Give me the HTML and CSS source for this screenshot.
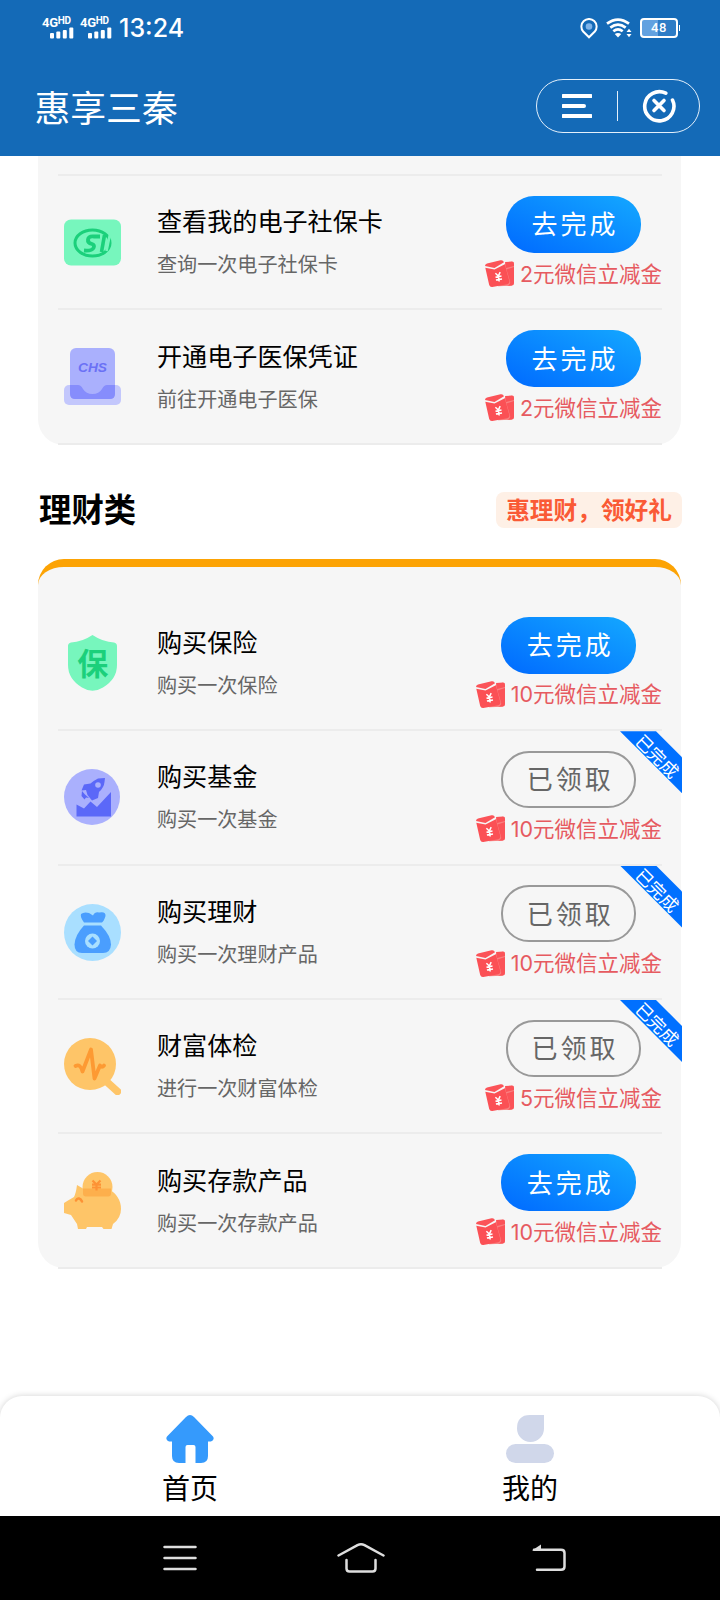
FILE: index.html
```html
<!DOCTYPE html>
<html lang="zh-CN">
<head>
<meta charset="utf-8">
<title>惠享三秦</title>
<link rel="stylesheet" href="styles.css">
</head>
<body>
<svg class="defs" aria-hidden="true">
  <symbol id="packet" viewBox="0 0 29 27">
    <path d="M20 3.5 26.5 1.8Q29 1.5 29 4V23Q29 25.6 26.5 25.8L13 26.3Z" fill="#f98080"/>
    <path d="M20 2 27 1.6Q29 1.6 29 4V6L21 8Z" fill="#fb5358"/>
    <path d="M0 6Q0 4.200 2 3.600L15.500.3Q18-.3 19 2.200L9.500 8Z" fill="#fb5358"/>
    <path d="M.3 7.800 9.500 9.500 19.800 4.200 24.300 21Q24.800 23.500 22.400 24.200L7.300 26.900Q5 27.200 4.200 25Z" fill="#fb5055"/>
    <path d="M21.500 9.500 29 7V23Q29 25.400 26.500 25.600L22 25.800Q26 24.600 25 21.500Z" fill="#fb5358"/>
    <path d="M10.400 13.200 13.300 16 15.200 12.200M13.300 16 14.200 21.500M10.500 17.200 16.500 16M10.900 20 17 18.900" fill="none" stroke="#fff" stroke-width="1.500"/>
  </symbol>
</svg>
<div class="phone">
  <header class="top">
    <div class="status">
      <div class="status-left">
        <div class="sim"><span class="net">4G<sup>HD</sup></span><svg width="24" height="12" viewBox="0 0 24 12"><g fill="#fff"><rect y="6" width="4" height="5.500" rx="1"/><rect x="6.300" y="4.500" width="4" height="7" rx="1"/><rect x="12.800" y="3" width="4" height="8.500" rx="1"/><rect x="19.300" y=".5" width="4" height="11" rx="1"/></g></svg></div>
        <div class="sim"><span class="net">4G<sup>HD</sup></span><svg width="24" height="12" viewBox="0 0 24 12"><g fill="#fff"><rect y="6" width="4" height="5.500" rx="1"/><rect x="6.300" y="4.500" width="4" height="7" rx="1"/><rect x="12.800" y="3" width="4" height="8.500" rx="1"/><rect x="19.300" y=".5" width="4" height="11" rx="1"/></g></svg></div>
        <span class="time">13:24</span>
      </div>
      <div class="status-right">
        <svg width="18" height="21" viewBox="0 0 18 21"><path d="M9 19.300 3.200 13.500A7.600 7.600 0 1 1 14.800 13.500Z" fill="none" stroke="#fff" stroke-width="2"/><circle cx="9" cy="8.500" r="3.300" fill="#7fb4ea"/></svg>
        <svg width="26" height="20" viewBox="0 0 26 20"><g fill="none" stroke="#fff" stroke-width="2.700"><path d="M1 5.700Q12 -2.500 23 5.700"/><path d="M4.300 9.600Q12 3.700 19.700 9.600"/><path d="M7.300 13.300Q12 9.600 16.700 13.300"/></g><path d="M8.800 16Q12 13.800 15.200 16L12 19.500Z" fill="#fff"/><path d="M20.500 14 23 10.800 25.500 14ZM20.500 16 23 19.200 25.500 16Z" fill="#fff"/></svg>
        <div class="battery"><span>48</span></div>
      </div>
    </div>
    <div class="titlebar">
      <h1>惠享三秦</h1>
      <div class="capsule">
        <svg width="30" height="26" viewBox="0 0 30 26"><path d="M1 3H29M1 13H22M1 23H29" stroke="#fff" stroke-width="4" stroke-linecap="round"/></svg>
        <i></i>
        <svg width="34" height="34" viewBox="0 0 34 34"><path d="M23.800 4.200A14.600 14.600 0 1 0 30.500 11" fill="none" stroke="#fff" stroke-width="3.600" stroke-linecap="round"/><path d="M12 11.500 22 21.500M22 11.500 12 21.500" stroke="#fff" stroke-width="3.600" stroke-linecap="round"/></svg>
      </div>
    </div>
  </header>

  <main class="content">
    <section class="card card-tail">
      <div class="lead"></div>
      <div class="row">
        <svg class="icon" viewBox="0 0 57 57"><rect y="5.500" width="57" height="46" rx="7" fill="#77f6bd"/><ellipse cx="28.500" cy="29" rx="17.500" ry="13" fill="none" stroke="#1bd07b" stroke-width="3"/><path d="M36 22.500H30Q24.500 22 24 25.500T28 30Q31 31 29.500 34T20 36.500" fill="none" stroke="#1bd07b" stroke-width="3.800"/><path d="M40.500 21 37.500 38" stroke="#1bd07b" stroke-width="3.600"/><path d="M46 20 42.500 37" stroke="#77f6bd" stroke-width="2.600"/></svg>
        <div class="info"><h3>查看我的电子社保卡</h3><p>查询一次电子社保卡</p></div>
        <div class="act"><button class="btn">去完成</button><div class="reward"><svg><use href="#packet"/></svg>2元微信立减金</div></div>
      </div>
      <div class="row">
        <svg class="icon" viewBox="0 0 57 57"><rect y="37" width="57" height="20" rx="5" fill="#c3c7fc"/><rect x="6" width="45" height="51" rx="6" fill="#aab0fd"/><path d="M6 37H14Q17 37 19 41Q22 46 28.500 46T38 41Q40 37 43 37H51V46Q51 51 46 51H11Q6 51 6 46Z" fill="#868dfc"/><text x="28.500" y="24" text-anchor="middle" class="chs" textLength="29" lengthAdjust="spacingAndGlyphs">CHS</text></svg>
        <div class="info"><h3>开通电子医保凭证</h3><p>前往开通电子医保</p></div>
        <div class="act"><button class="btn">去完成</button><div class="reward"><svg><use href="#packet"/></svg>2元微信立减金</div></div>
      </div>
    </section>

    <div class="section-head"><h2>理财类</h2><span class="tag">惠理财，领好礼</span></div>

    <section class="card card-accent">
      <div class="row">
        <svg class="icon" viewBox="0 0 57 57"><path d="M28.500 0Q39 7 50 7.500Q53 8 53 11V30Q53 44 39 52.500Q28.500 59 18 52.500Q4 44 4 30V11Q4 8 7 7.500Q18 7 28.500 0Z" fill="#77f6bd"/><text x="28.800" y="39.500" text-anchor="middle" class="bao">保</text></svg>
        <div class="info"><h3>购买保险</h3><p>购买一次保险</p></div>
        <div class="act"><button class="btn">去完成</button><div class="reward"><svg><use href="#packet"/></svg>10元微信立减金</div></div>
      </div>
      <div class="row">
        <svg class="icon" viewBox="0 0 57 57"><circle cx="28" cy="28" r="28" fill="#aab0fd"/><path d="M12.500 35.500 20 39.500 26.500 32.500 33 38 47 23V47.500H12.500Z" fill="#5b68f8"/><path d="M41 9 34 9.500Q29 12 26.500 14.500L20 15.500 17.500 21.500 22 21 23.500 26 28 31.500 34 29 35 23Q40 18.500 40.500 13Z" fill="#5b68f8"/><circle cx="34" cy="16" r="2.800" fill="#aab0fd"/><path d="M18 22 21 25.500 25 29 22 28.500 20.500 30.500 17.500 27Z" fill="#5b68f8"/></svg>
        <div class="info"><h3>购买基金</h3><p>购买一次基金</p></div>
        <div class="act"><button class="btn done">已领取</button><div class="reward"><svg><use href="#packet"/></svg>10元微信立减金</div></div>
        <div class="ribbon"><span>已完成</span></div>
      </div>
      <div class="row">
        <svg class="icon" viewBox="0 0 57 57"><circle cx="28.500" cy="28.500" r="28.500" fill="#a9dfff"/><path d="M17 10Q20 7.500 25 9L29 11.500Q31 7.500 35 8.500Q42 7 41.500 12Q40 17 38 18.500H20Q16 13 17 10Z" fill="#4a9efe"/><path d="M20 21.500H37Q47 32 47 40.500Q46.500 49 39 49H18Q10.500 49 10.500 40.500Q11 31 20 21.500Z" fill="#4a9efe"/><circle cx="28.500" cy="37" r="7.500" fill="#a9dfff"/><path d="M28.500 32.500 33 37 28.500 41.500 24 37Z" fill="#4a9efe"/></svg>
        <div class="info"><h3>购买理财</h3><p>购买一次理财产品</p></div>
        <div class="act"><button class="btn done">已领取</button><div class="reward"><svg><use href="#packet"/></svg>10元微信立减金</div></div>
        <div class="ribbon"><span>已完成</span></div>
      </div>
      <div class="row">
        <svg class="icon" viewBox="0 0 57 57"><path d="M43 44 53.500 53.500" stroke="#fec568" stroke-width="7.500" stroke-linecap="round"/><circle cx="26" cy="26" r="26" fill="#fec568"/><path d="M11.500 28Q16.500 25.500 18.500 33.500L27 11.500 30.500 40.500 36 27.500Q38 30 40 27.500" fill="none" stroke="#fd9a33" stroke-width="3.800" stroke-linecap="round" stroke-linejoin="round"/></svg>
        <div class="info"><h3>财富体检</h3><p>进行一次财富体检</p></div>
        <div class="act"><button class="btn done">已领取</button><div class="reward"><svg><use href="#packet"/></svg>5元微信立减金</div></div>
        <div class="ribbon"><span>已完成</span></div>
      </div>
      <div class="row">
        <svg class="icon" viewBox="0 0 57 57"><circle cx="33.500" cy="15" r="15" fill="#fec568"/><path d="M13 13 19 16.500H44Q57 24 57 37Q57 46 49 52L47.500 57H39.500L38 55H23L22 57H14L13 52 7 43 0 41V31L4 28.500 10 25Q12 21 13 13Z" fill="#fec568"/><path d="M19 16.500H47V21.500Q47 24.500 44 24.500H22Q19 24.500 19 21.500Z" fill="#fdaf4c"/><path d="M28.500 8.500 32.500 12.500 36.500 8.500M28 12.700H37M28 15.500H37M32.500 12V18.500" fill="none" stroke="#fd9235" stroke-width="2.200"/><path d="M12 28.500Q13 26 15 26.500T18 29.500" fill="none" stroke="#fd9235" stroke-width="2.500" stroke-linecap="round"/></svg>
        <div class="info"><h3>购买存款产品</h3><p>购买一次存款产品</p></div>
        <div class="act"><button class="btn">去完成</button><div class="reward"><svg><use href="#packet"/></svg>10元微信立减金</div></div>
      </div>
    </section>
  </main>

  <nav class="tabs">
    <a class="tab"><svg width="50" height="48" viewBox="0 0 50 48"><path d="M21 2Q25-2 29 2L48 21.500Q50 25 46 26.500H43V41Q43 48 36 48H30.500V32Q30.500 30 28.500 30H22.500Q20.500 30 20.500 32V48H14Q7 48 7 41V26.500H4Q0 25 2 21.500Z" fill="#359afc"/></svg><span>首页</span></a>
    <a class="tab"><svg width="50" height="48" viewBox="0 0 50 48"><path d="M25 0H39V13.500A13.500 13.500 0 0 1 12 13.500Q12 0 25 0Z" fill="#d0d7ea"/><rect x="1" y="29" width="48" height="19" rx="9.500" fill="#d0d7ea"/></svg><span>我的</span></a>
  </nav>

  <footer class="sysbar">
    <svg width="34" height="26" viewBox="0 0 34 26"><path d="M1.500 2H32.500M1.500 13H32.500M1.500 24H32.500" stroke="#dedede" stroke-width="2.500" stroke-linecap="round"/></svg>
    <svg class="home" width="48" height="30" viewBox="0 0 48 30"><path d="M1.500 12.500 20.500 2.200Q24 .5 27.500 2.200L46.500 12.500M9.500 17V25.500Q9.500 28.500 12.500 28.500H35.500Q38.500 28.500 38.500 25.500V17" fill="none" stroke="#dedede" stroke-width="2.500" stroke-linecap="round"/></svg>
    <svg width="36" height="28" viewBox="0 0 36 28"><path d="M3 5.800H30Q33.500 5.800 33.500 9V22.500Q33.500 25.800 30 25.800H6" fill="none" stroke="#dedede" stroke-width="2.500" stroke-linecap="round"/><path d="M1 6.500 10 .5V6.500Z" fill="#dedede"/></svg>
  </footer>
</div>
</body>
</html>
```
FILE: styles.css
```css
* { box-sizing: border-box; margin: 0; padding: 0; }
body {
  width: 720px;
  background: #fff;
  font-family: "Noto Sans CJK SC", "Noto Sans", sans-serif;
  color: #000;
}
.defs { display: none; }
.phone { width: 720px; height: 1600px; display: flex; flex-direction: column; overflow: hidden; }

.top { height: 156px; background: #146ab7; color: #fff; flex: none; }
.status { height: 56px; display: flex; justify-content: space-between; padding: 0 42px 0 42px; }
.status-left { display: flex; gap: 6px; }
.sim { width: 32px; padding-top: 16px; display: flex; flex-direction: column; align-items: flex-end; }
.net { width: 32px; height: 10.5px; font: 700 13px/11px Roboto, sans-serif; letter-spacing: -.3px; white-space: nowrap; }
.net sup { font-size: 10px; line-height: 1; vertical-align: 2.5px; letter-spacing: -.2px; }
.time { font: 500 25px/56px Inter, sans-serif; margin-left: 1px; }
.status-right { display: flex; align-items: center; gap: 8px; }
.battery {
  width: 38px; height: 20px; border: 2px solid #fff; border-radius: 4px; position: relative;
  background: linear-gradient(90deg, #62a1e0 48%, #2d7cc6 48%);
  font: 500 13px/16px Roboto, sans-serif; text-align: center; letter-spacing: .5px;
}
.battery::after { content: ""; position: absolute; right: -4px; top: 5px; width: 1.5px; height: 6px; background: #fff; }
.titlebar { height: 100px; display: flex; justify-content: space-between; align-items: center; padding: 0 20px 0 34.5px; }
.titlebar h1 { font-size: 35.8px; font-weight: 400; line-height: 54px; padding-bottom: 1px; }
.capsule {
  width: 164px; height: 54px; border: 1px solid #e4f0fb; border-radius: 27px;
  display: flex; align-items: center; justify-content: space-between; padding: 0 23px 0 25px;
}
.capsule i { width: 1px; height: 30px; background: #e4f0fb; }

.content { flex: 1; padding: 0 39px 0 38px; }
.card { width: 643px; background: #f6f6f6; padding: 0 19px 0 20px; }
.card-tail { height: 288.8px; border-radius: 0 0 26px 26px; }
.card-accent { height: 709px; border-top: 8px solid #fca304; border-radius: 26px; padding-top: 29.8px; }
.lead { height: 20px; border-bottom: 2px solid #ececec; }
.row {
  height: 134.4px; border-bottom: 2px solid #ececec; position: relative;
  display: flex; align-items: flex-start; padding-left: 6px;
}
.icon { width: 57px; height: 57px; margin-top: 38px; flex: none; }
.chs { font: italic 700 13px "Liberation Sans", sans-serif; fill: #6a71f5; }
.bao { font: 700 31px "Noto Sans CJK SC", sans-serif; fill: #1bd07b; }
.info { flex: 1; padding: 25.2px 0 0 36px; }
.info h3 { font-size: 25.1px; line-height: 38px; font-weight: 400; }
.info p { font-size: 20.1px; line-height: 30px; color: #666; margin-top: 10px; }
.act { display: flex; flex-direction: column; align-items: center; padding-top: 19.8px; }
.btn {
  width: 135px; height: 57px; border: 0; border-radius: 28px; color: #fff;
  background: linear-gradient(25deg, #0270ff 10%, #12a2ff 90%);
  font: 400 26px/52px "Noto Sans CJK SC", sans-serif; letter-spacing: 3px; padding: 0 0 2px 3px;
}
.btn.done { background: transparent; border: 2px solid #999; color: #666; line-height: 48px; }
.reward {
  display: flex; align-items: center; height: 32px; margin-top: 4.8px; white-space: nowrap;
  font: 400 21.5px/32px Inter, "Noto Sans CJK SC", sans-serif; color: #e65a60;
}
.reward svg { width: 29px; height: 27px; margin-right: 6px; }
.ribbon { position: absolute; right: -20px; top: 0; width: 62px; height: 62px; }
.ribbon::before {
  content: ""; position: absolute; inset: 0; background: #0070ff;
  clip-path: polygon(0 0, 36px 0, 62px 26px, 62px 62px);
}
.ribbon span {
  position: absolute; left: 11px; top: 15.5px; width: 53px; height: 18px;
  color: #fff; font-size: 17.5px; line-height: 18px; text-align: center; white-space: nowrap; transform: rotate(45deg);
}
.section-head { height: 114.2px; display: flex; align-items: center; justify-content: space-between; padding: 17px 0 0 1px; }
.section-head h2 { font-size: 32.4px; line-height: 46px; font-weight: 700; margin-top: -4px; }
.tag {
  height: 36px; margin-right: -1px; padding: 0 10px; border-radius: 8px; background: #fef0e6;
  color: #fa5a35; font-size: 23.7px; line-height: 34px; font-weight: 700;
}

.tabs {
  height: 120px; flex: none; display: flex; padding: 0 20px; background: #fff;
  border-radius: 22px 22px 0 0; box-shadow: 0 0 6px rgba(0, 0, 0, .18); position: relative;
}
.tab { flex: 1; display: flex; flex-direction: column; align-items: center; padding-top: 19px; }
.tab span { font-size: 28px; line-height: 42px; margin-top: 3px; }
.sysbar {
  height: 84px; flex: none; background: #000; position: relative;
  display: flex; align-items: center; justify-content: space-between; padding: 0 153px 0 163px;
}
.home { margin-right: 7px; }
```
